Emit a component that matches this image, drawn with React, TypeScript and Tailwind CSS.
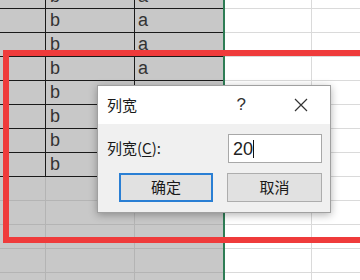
const ROWS = 12
const DATA_ROWS = 8

function SheetRow({ i }: { i: number }) {
  const data = i < DATA_ROWS
  const line = data ? 'border-[#1a1a1a]' : 'border-[#b4b4b4]'
  return (
    <div className="flex h-[24px]">
      <div className={`w-[46px] shrink-0 bg-[#c8c8c8] border-b border-r ${line}`} />
      <div className={`w-[89px] shrink-0 bg-[#c8c8c8] border-b border-r ${line} pl-[4px] flex items-end pb-[1px] text-[18px] leading-[22px] text-[#333]`}>
        {data ? 'b' : ''}
      </div>
      <div className={`w-[88px] shrink-0 bg-[#c8c8c8] border-b ${line} pl-[3px] flex items-end pb-[1px] text-[18px] leading-[22px] text-[#333]`}>
        {data ? 'a' : ''}
      </div>
      <div className="w-[2px] shrink-0 bg-[#2e7d55]" />
      <div className="w-[87px] shrink-0 bg-white border-b border-r border-[#dadada]" />
      <div className="flex-1 bg-white border-b border-[#dadada]" />
    </div>
  )
}

const cjk = { fontFamily: '"Noto Sans CJK SC", sans-serif' }

export default function App() {
  return (
    <div
      className="relative w-[360px] h-[280px] overflow-hidden bg-white"
      style={{ fontFamily: '"Liberation Sans", "Noto Sans CJK SC", sans-serif' }}
    >
      {/* Sheet grid */}
      <div className="-mt-[15px] flex flex-col">
        {Array.from({ length: ROWS + 1 }, (_, i) => (
          <SheetRow key={i} i={i} />
        ))}
      </div>

      {/* Red annotation box */}
      <div className="absolute left-[3px] top-[50px] w-[420px] h-[193px] border-[6px] border-[#ef3b3b]" />

      {/* Column width dialog */}
      <div className="absolute left-[97px] top-[85px] w-[234px] h-[128px] border border-[#a0a0a0] shadow-[0_2px_8px_rgba(0,0,0,0.3)] flex flex-col text-[#1a1a1a]">
        <div className="h-[38px] bg-white flex items-center pl-[9px] pr-[22px]">
          <span className="text-[15px]" style={cjk}>列宽</span>
          <span className="ml-auto mr-[48px] text-[17px] text-[#333]">?</span>
          <svg width="14" height="14" viewBox="0 0 14 14">
            <path d="M1 1 L13 13 M13 1 L1 13" stroke="#333" strokeWidth="1.2" />
          </svg>
        </div>
        <div className="flex-1 bg-[#f0f0f0] pt-[10px]">
          <div className="flex items-center pl-[9px] pr-[8px]">
            <span className="text-[15px]" style={cjk}>
              列宽(<span className="underline underline-offset-2">C</span>):
            </span>
            <div className="ml-auto w-[94px] h-[29px] bg-white border border-[#a8a8a8] flex items-center pl-[4px]">
              <span className="text-[18px] leading-none text-[#222]">20</span>
              <span className="w-px h-[18px] bg-[#111]" />
            </div>
          </div>
          <div className="flex mt-[10px] pl-[21px] gap-[14px]">
            <button className="shrink-0 w-[94px] h-[29px] bg-[#e1e1e1] border-2 border-[#2a7fd4] text-[15px]" style={cjk}>
              确定
            </button>
            <button className="shrink-0 w-[95px] h-[29px] bg-[#e1e1e1] border border-[#adadad] text-[15px]" style={cjk}>
              取消
            </button>
          </div>
        </div>
      </div>
    </div>
  )
}
